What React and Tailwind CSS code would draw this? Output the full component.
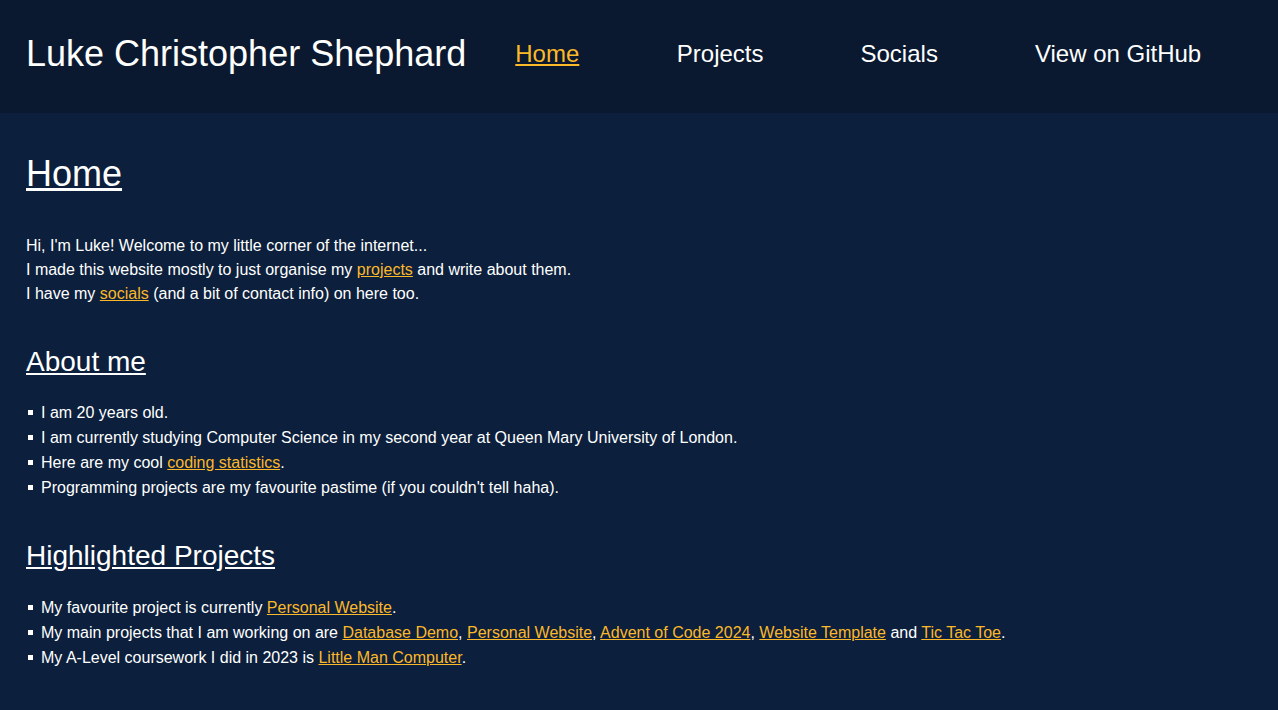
function Item({ children }) {
  return (
    <li className="flex items-start">
      <span className="mt-[10px] ml-[2px] mr-[8px] w-[5px] h-[5px] bg-white shrink-0"></span>
      <span>{children}</span>
    </li>
  );
}

export default function App() {
  const link = "text-[#fbb829] underline";
  return (
    <div className="min-h-screen bg-[#0c1f3c] text-white font-['Liberation_Sans',Arial,sans-serif]">
      <header className="h-[113px] bg-[#0a192f] flex items-center px-[26px] pb-[5px] whitespace-nowrap">
        <h1 className="text-[36px] leading-none shrink-0">Luke Christopher Shephard</h1>
        <nav className="flex items-center shrink-0">
          <a href="#" className="text-[24px] text-[#fbb829] underline px-[49px]">Home</a>
          <a href="#" className="text-[24px] px-[48.5px]">Projects</a>
          <a href="#" className="text-[24px] px-[48.5px]">Socials</a>
          <a href="#" className="text-[24px] px-[48.5px]">View on GitHub</a>
        </nav>
      </header>

      <main className="px-[26px] pt-[40px] pb-10">
        <h2 className="text-[36px] leading-[41px] underline">Home</h2>
        <p className="mt-[40px] text-[16px] leading-[24px]">
          Hi, I'm Luke! Welcome to my little corner of the internet...
          <br />
          I made this website mostly to just organise my <a href="#" className={link}>projects</a> and write about them.
          <br />
          I have my <a href="#" className={link}>socials</a> (and a bit of contact info) on here too.
        </p>

        <h3 className="mt-[40px] text-[28px] leading-[32px] underline">About me</h3>
        <ul className="mt-[22px] text-[16px] leading-[25px]">
          <Item>I am 20 years old.</Item>
          <Item>I am currently studying Computer Science in my second year at Queen Mary University of London.</Item>
          <Item>Here are my cool <a href="#" className={link}>coding statistics</a>.</Item>
          <Item>Programming projects are my favourite pastime (if you couldn't tell haha).</Item>
        </ul>

        <h3 className="mt-[40px] text-[28px] leading-[32px] underline">Highlighted Projects</h3>
        <ul className="mt-[23px] text-[16px] leading-[25px]">
          <Item>My favourite project is currently <a href="#" className={link}>Personal Website</a>.</Item>
          <Item>
            My main projects that I am working on are <a href="#" className={link}>Database Demo</a>,{" "}
            <a href="#" className={link}>Personal Website</a>, <a href="#" className={link}>Advent of Code 2024</a>,{" "}
            <a href="#" className={link}>Website Template</a> and <a href="#" className={link}>Tic Tac Toe</a>.
          </Item>
          <Item>My A-Level coursework I did in 2023 is <a href="#" className={link}>Little Man Computer</a>.</Item>
        </ul>
      </main>
    </div>
  );
}
